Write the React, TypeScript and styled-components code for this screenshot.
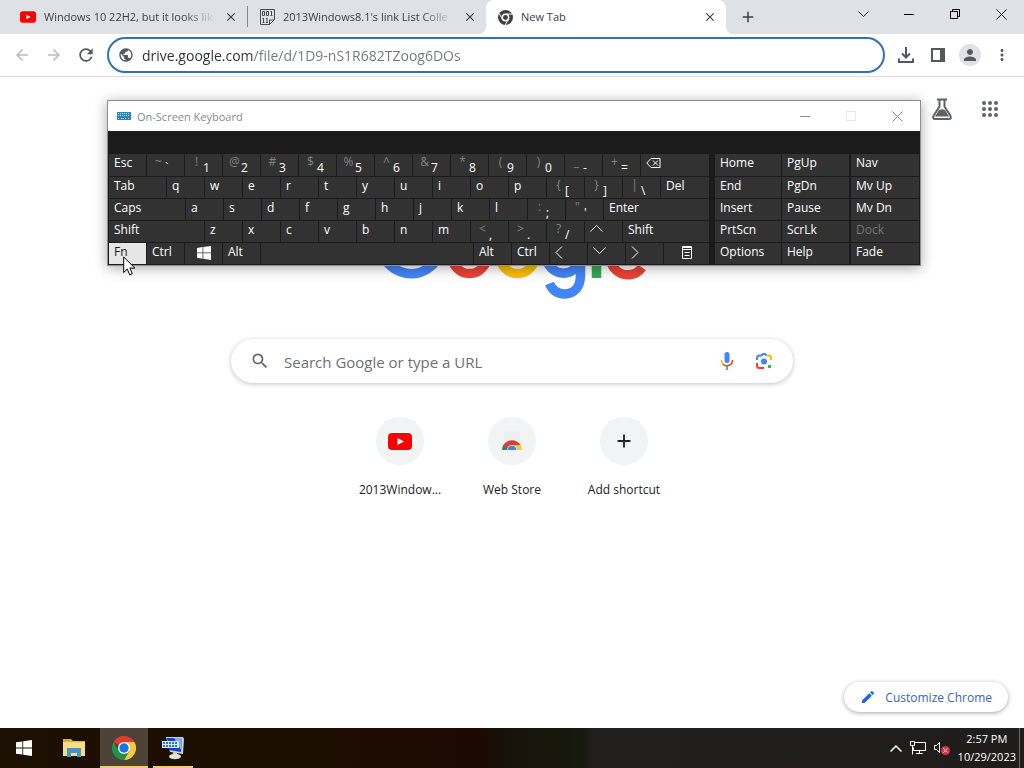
import React from 'react';
import styled, { createGlobalStyle, css } from 'styled-components';
import {
  MdArrowBack, MdArrowForward, MdRefresh, MdPublic, MdMoreVert, MdPerson, MdSearch, MdEdit, MdClose, MdAdd,
} from 'react-icons/md';

const GlobalStyle = createGlobalStyle`
  *, *::before, *::after { box-sizing: border-box; }
  body { margin: 0; font-family: "Open Sans", "Noto Sans", sans-serif; font-size: 12px; color: #202124; }
  button, input { font: inherit; color: inherit; }
  button { border: 0; padding: 0; background: none; cursor: default; }
  svg { display: block; flex: none; }
`;

const Desktop = styled.div`
  position: relative;
  display: flex;
  flex-direction: column;
  min-height: 100vh;
  overflow: hidden;
  background: #fff;
`;

/* ---------- Browser tab strip ---------- */

const TabStrip = styled.header`
  display: flex;
  height: 34px;
  background: #dee1e6;
`;

const Tabs = styled.div`
  display: grid;
  grid-template-columns: 248fr 238fr 240fr;
  flex: 0 1 726px;
  min-width: 0;
`;

const Tab = styled.div<{ $active?: boolean; $first?: boolean; $divided?: boolean }>`
  position: relative;
  display: flex;
  align-items: center;
  gap: 8px;
  min-width: 0;
  padding: 0 8px 0 ${p => (p.$first ? 20 : 12)}px;
  ${p => p.$divided && css`
    border-right: 1px solid transparent;
    border-image: linear-gradient(transparent 7px, #83868b 7px, #83868b 26px, transparent 26px) 1;
  `}
  ${p => p.$active && css`
    background: #fff;
    border-radius: 8px 8px 0 0;
    &::before, &::after {
      content: '';
      position: absolute;
      bottom: 0;
      width: 8px;
      height: 8px;
    }
    &::before { left: -8px; background: radial-gradient(circle at 0 0, transparent 8px, #fff 8px); }
    &::after { right: -8px; background: radial-gradient(circle at 100% 0, transparent 8px, #fff 8px); }
  `}
`;

const TabTitle = styled.button<{ $fade?: boolean }>`
  flex: 1;
  min-width: 0;
  overflow: hidden;
  white-space: nowrap;
  text-align: left;
  font-size: 11px;
  line-height: 18px;
  color: #3c4043;
  ${p => p.$fade && css`mask-image: linear-gradient(90deg, #000 calc(100% - 32px), transparent);`}
`;

const TabClose = styled.button`
  display: flex;
  align-items: center;
  justify-content: center;
  width: 16px;
  height: 16px;
  color: #3c4043;
`;

const NewTab = styled(TabClose)`
  width: 28px;
  height: 34px;
  margin-left: 8px;
`;

const Caption = styled.div`
  display: flex;
  margin-left: auto;
`;

const CaptionButton = styled.button`
  display: flex;
  align-items: center;
  justify-content: center;
  width: 46px;
  height: 28px;
`;

/* ---------- Browser toolbar ---------- */

const Toolbar = styled.nav`
  display: flex;
  align-items: center;
  height: 43px;
  padding: 0 6px;
  border-bottom: 1px solid #dadce0;
`;

const ToolButton = styled.button<{ $dim?: boolean }>`
  display: flex;
  align-items: center;
  justify-content: center;
  width: 32px;
  height: 32px;
  color: ${p => (p.$dim ? '#b9bbbe' : '#54575b')};
`;

const Omnibox = styled.label`
  display: flex;
  align-items: center;
  gap: 8px;
  flex: 1;
  height: 36px;
  margin: 0 5px;
  padding: 0 9px;
  border: 2px solid #3470b8;
  border-radius: 18px;
  color: #54575b;
`;

const UrlInput = styled.input`
  flex: 1;
  min-width: 0;
  border: 0;
  outline: 0;
  padding: 0;
  height: 24px;
  font-size: 14px;
  background: linear-gradient(90deg, #2b2d30 111px, #73767a 111px);
  background-clip: text;
  -webkit-text-fill-color: transparent;
`;

const Avatar = styled.span`
  display: flex;
  align-items: center;
  justify-content: center;
  width: 22px;
  height: 22px;
  border-radius: 50%;
  background: #dee1e6;
  color: #54575b;
`;

/* ---------- New tab page ---------- */

const Page = styled.main`
  position: relative;
  flex: 1;
  display: flex;
  flex-direction: column;
  align-items: center;
`;

const PageActions = styled.div`
  display: flex;
  align-self: flex-end;
  gap: 24px;
  padding: 20px 22px 0 0;
  height: 44px;
`;

const PageAction = styled.button`
  display: flex;
  align-items: center;
  justify-content: center;
  width: 24px;
  height: 24px;
  color: #5f6368;
`;

const Logo = styled.svg`
  margin-top: 88px;
`;

const SearchBox = styled.label`
  display: flex;
  align-items: center;
  width: 562px;
  max-width: 90%;
  height: 44px;
  margin-top: 38px;
  padding: 0 20px 0 19px;
  border-radius: 22px;
  box-shadow: 0 1px 5px rgba(32, 33, 36, 0.28);
  color: #5f6368;
`;

const SearchInput = styled.input`
  flex: 1;
  min-width: 0;
  margin-left: 14px;
  padding: 2px 0 0;
  border: 0;
  outline: 0;
  font-size: 15px;
  background: none;
  &::placeholder { color: #6c6f73; opacity: 1; }
`;

const SearchIcons = styled.span`
  display: flex;
  gap: 18px;
`;

const Shortcuts = styled.div`
  display: flex;
  margin-top: 34px;
`;

const Shortcut = styled.a`
  display: flex;
  flex-direction: column;
  align-items: center;
  gap: 16px;
  width: 112px;
  line-height: 18px;
  color: #202124;
  text-decoration: none;
`;

const ShortcutIcon = styled.span`
  display: flex;
  align-items: center;
  justify-content: center;
  width: 48px;
  height: 48px;
  border-radius: 50%;
  background: #f1f3f4;
`;

const Customize = styled.button`
  position: absolute;
  right: 16px;
  bottom: 16px;
  display: flex;
  align-items: center;
  gap: 9px;
  height: 30px;
  padding: 0 16px;
  border-radius: 15px;
  background: #fff;
  box-shadow: 0 1px 4px rgba(32, 33, 36, 0.4);
  color: #3b62b5;
`;

/* ---------- On-screen keyboard window ---------- */

const KeyboardWindow = styled.section`
  position: absolute;
  top: 100px;
  left: 107px;
  right: 103px;
  border: 1px solid #8e8e8e;
  background: #1b1b1b;
  box-shadow: 0 2px 12px rgba(0, 0, 0, 0.35);
`;

const KeyboardTitle = styled.div`
  display: flex;
  align-items: center;
  gap: 6px;
  height: 30px;
  padding-left: 9px;
  background: #fff;
  font-size: 11px;
  color: #8a8a8a;
`;

const Keys = styled.div`
  display: flex;
  padding: 23px 1px 1px;
`;

const KeyBlock = styled.div<{ $grow: number; $gap: number }>`
  display: flex;
  flex-direction: column;
  gap: 1px;
  flex: ${p => p.$grow} 1 0;
  margin-left: ${p => p.$gap}px;
`;

const KeyRow = styled.div<{ $tall?: boolean; $columns: number[] }>`
  display: grid;
  grid-template-columns: ${p => p.$columns.map(c => `minmax(0, ${c}fr)`).join(' ')};
  grid-template-rows: minmax(0, 1fr);
  gap: 1px;
  height: ${p => (p.$tall ? 22 : 21)}px;
`;

const Key = styled.button<{ $lit?: boolean; $dim?: boolean; $center?: boolean }>`
  display: flex;
  align-items: flex-start;
  min-width: 0;
  padding: 0 5px;
  justify-content: ${p => (p.$center ? 'center' : 'flex-start')};
  line-height: 18px;
  white-space: nowrap;
  color: ${p => (p.$lit ? '#1b1b1b' : p.$dim ? '#777' : '#fff')};
  background: ${p => (p.$lit ? '#e6e6e6' : '#323232')};
`;

const Shifted = styled.span`
  width: 13px;
  line-height: 16px;
  color: #828282;
`;

const Plain = styled.span`
  line-height: 28px;
`;

const Pointer = styled.svg`
  position: absolute;
  left: 123px;
  top: 256px;
`;

/* ---------- Taskbar ---------- */

const Taskbar = styled.footer`
  display: flex;
  height: 40px;
  background: linear-gradient(90deg, #1c1002, #1d0e02 30%, #1b0a01 47%, #17120a 49%, #171a0e 57%, #22201e 58%, #1f1c1a);
  color: #fff;
`;

const TaskButton = styled.button<{ $active?: boolean; $wide?: boolean; $running?: boolean }>`
  display: flex;
  flex-direction: column;
  align-items: center;
  justify-content: center;
  width: ${p => (p.$wide ? 52 : 48)}px;
  height: 40px;
  ${p => p.$active && css`background: #4c4238; box-shadow: inset 0 -2px #f3c777;`}
  ${p => p.$running && css`
    width: 40px;
    margin-left: 5px;
    box-shadow: inset 0 -2px #f3c777;
  `}
`;

const Tray = styled.div`
  display: flex;
  align-items: center;
  gap: 8px;
  margin-left: auto;
  padding-right: 3px;
  border-right: 1px solid #6b6764;
  margin-right: 4px;
`;

const TrayButton = styled.button`
  display: flex;
`;

const Clock = styled.time`
  font-size: 11px;
  line-height: 18px;
  text-align: center;
`;

/* ---------- Icons ---------- */

const YouTube = ({ w, h }: { w: number; h: number }) => (
  <svg width={w} height={h} viewBox="0 0 24 17">
    <rect width="24" height="17" rx="4" fill="#f00" />
    <path d="M9.500 5v7l6.500-3.500z" fill="#fff" />
  </svg>
);

const BinaryFile = () => (
  <svg width="15" height="16" viewBox="0 0 15 16" fill="none" stroke="#4a4d50">
    <path d="M.5.5h14v10l-5 5h-9z" />
    <path d="M9.500 15.500v-4.500h5" />
    <path d="M2.500 2.500h2v4h-2zM6.500 2.500h2v4h-2zM11.500 2v5M10.500 2.500h1M10.500 6.500h2M3.500 9v5M2.500 9.500h1M2.500 13.500h2M7 9v5M6 9.500h1M6 13.500h2" />
  </svg>
);

const ChromeMono = () => (
  <svg width="15" height="15" viewBox="0 0 24 24">
    <circle cx="12" cy="12" r="12" fill="#3c4043" />
    <circle cx="12" cy="12" r="6.300" fill="#fff" />
    <circle cx="12" cy="12" r="3.900" fill="#3c4043" />
    <path d="M12 6.500h11M7.200 14.800 1.800 5.500M16.800 14.800 11.500 24" stroke="#fff" strokeWidth="1.600" />
  </svg>
);

const ChromeColor = () => (
  <svg width="24" height="24" viewBox="0 0 24 24">
    <path d="M12 12 1.600 6A12 12 0 0 1 22.400 6z" fill="#e33b2e" />
    <path d="M12 6h10.400A12 12 0 0 1 12 24l5.200-9z" fill="#fcc934" />
    <path d="M1.600 6 6.800 15a6 6 0 0 0 10.400 0L12 24A12 12 0 0 1 1.600 6z" fill="#1e9448" />
    <circle cx="12" cy="12" r="6" fill="#fff" />
    <circle cx="12" cy="12" r="4.700" fill="#1a73e8" />
  </svg>
);

const GoogleLogo = () => (
  <Logo width="272" height="92" viewBox="0 0 272 92" fill="none" strokeWidth="9.500" role="img" aria-label="Google">
    <path d="M58.500 14.500A30.500 30.500 0 1 0 65.500 37H36" stroke="#4285f4" />
    <circle cx="93.500" cy="47.200" r="17.400" stroke="#ea4335" />
    <circle cx="141.500" cy="47.200" r="17.400" stroke="#fbbc05" />
    <circle cx="187.500" cy="47.200" r="17" stroke="#4285f4" />
    <path d="M204.500 27v39c0 12-6.500 19-16 19-7.500 0-12.500-4.500-15-10.500" stroke="#4285f4" />
    <path d="M220.500 3v66" stroke="#34a853" />
    <path d="M266 58.500a17.400 17.400 0 1 1 .500-19.500L236 52" stroke="#ea4335" />
  </Logo>
);

const WindowsLogo = ({ size }: { size: number }) => (
  <svg width={size} height={size} viewBox="0 0 16 16" fill="#fff">
    <path d="M0 2.300 6.400 1.400v6.200H0zM7.200 1.300 16 0v7.600H7.200zM0 8.400h6.400v6.200L0 13.700zM7.200 8.400H16V16l-8.800-1.300z" />
  </svg>
);

const Folder = () => (
  <svg width="22" height="20" viewBox="0 0 22 20">
    <path d="M0 1h8l2 2h12v15H0z" fill="#e3a93a" />
    <path d="M0 4h22v14H0z" fill="#fbdc80" />
    <path d="M4 19v-9h14v9h-4v-4H8v4z" fill="#4b93bd" />
  </svg>
);

const OskTask = () => (
  <svg width="24" height="24" viewBox="0 0 24 24">
    <path d="M5 1h17l1 2-1 15-13-2z" fill="#c9d3de" />
    <path d="M6 2h15l-1 14-12-2z" fill="#1740bd" />
    <path d="M13 2h8l-1 12z" fill="#7fb0f2" />
    <rect x="1" y="5" width="17" height="7" fill="#d8ebfa" />
    <path d="M2 7h15M2 10h15" stroke="#2479c2" strokeDasharray="2 1" strokeWidth="2" />
    <path d="M12 16h4v4h-4z" fill="#cfccc2" />
    <ellipse cx="14" cy="20.500" rx="6" ry="2.800" fill="#e5e2d8" />
  </svg>
);

const KeyboardGlyph = () => (
  <svg width="14" height="8" viewBox="0 0 14 8">
    <rect width="14" height="8" fill="#2f7fbd" />
    <path d="M1 1.500h12M1 3.500h12M1 6.500h2M4 6.500h6M11 6.500h2" stroke="#cfe5f5" strokeDasharray="1 1" />
  </svg>
);

const Stroke = ({ w, h, d, color = 'currentColor', sw = 1 }: { w: number; h: number; d: string; color?: string; sw?: number }) => (
  <svg width={w} height={h} viewBox={`0 0 ${w} ${h}`} fill="none" stroke={color} strokeWidth={sw}>
    <path d={d} />
  </svg>
);

const Download = () => (
  <svg width="18" height="18" viewBox="0 0 18 18" fill="none" stroke="currentColor" strokeWidth="2">
    <path d="M9 1v10M5 7.500l4 4 4-4M2 12.500V16h14v-3.500" />
  </svg>
);

const SidePanel = () => (
  <svg width="14" height="14" viewBox="0 0 14 14">
    <rect x="1" y="1" width="12" height="12" fill="none" stroke="currentColor" strokeWidth="2" />
    <rect x="9" y="1" width="4" height="12" fill="currentColor" />
  </svg>
);

const Flask = () => (
  <svg width="20" height="22" viewBox="0 0 20 22">
    <path d="M5 1.500h10M7.500 2v6.500L1.500 18q-1 3 1.500 3h14q2.500 0 1.500-3L12.500 8.500V2" fill="none" stroke="currentColor" strokeWidth="2" />
    <path d="M7 12q3-1.500 6 0l4 6.500H3z" fill="currentColor" />
  </svg>
);

const AppsGrid = () => (
  <svg width="18" height="18" viewBox="0 0 18 18" fill="currentColor">
    {[3, 9, 15].map(y => [3, 9, 15].map(x => <circle key={`${x}-${y}`} cx={x} cy={y} r="2" />))}
  </svg>
);

const Mic = () => (
  <svg width="20" height="20" viewBox="0 0 20 20" fill="none" strokeWidth="1.600">
    <rect x="7.500" y="1" width="5" height="11" rx="2.500" fill="#4285f4" />
    <path d="M4.500 9A5.500 5.500 0 0 0 6 13" stroke="#fbbc04" />
    <path d="M6 13a5.500 5.500 0 0 0 9.500-4" stroke="#ea4335" />
    <path d="M10 15v4" stroke="#34a853" />
  </svg>
);

const Lens = () => (
  <svg width="18" height="20" viewBox="0 -1 18 20" fill="none" strokeWidth="2">
    <path d="M2 8V6q0-2.500 2.500-2.500h2L8 2h2l1.500 1.500" stroke="#4285f4" />
    <path d="M11.500 3.500h2Q16 3.500 16 6v2" stroke="#fbbc04" />
    <path d="M2 11v2.500Q2 16 4.500 16H9" stroke="#ea4335" />
    <circle cx="9" cy="9.500" r="3" fill="#4285f4" />
    <circle cx="14.500" cy="14.500" r="1.800" fill="#34a853" />
  </svg>
);

const WebStore = () => (
  <svg width="20" height="20" viewBox="0 0 20 20">
    <path d="M3 0h14l3 19H0z" fill="#eceff1" />
    <path d="M0 19a10 10 0 0 1 2-6l5 4v2z" fill="#1e9448" />
    <path d="M1.500 14A10 10 0 0 1 18.500 14L10 14.500 6 19z" fill="#de3d32" />
    <path d="M10 14h8.500a10 10 0 0 1 1.500 5h-7z" fill="#fcc934" />
    <path d="M5 19a5 5 0 0 1 10 0z" fill="#fff" />
    <path d="M5.500 19a4.500 4.500 0 0 1 9 0z" fill="#4285f4" />
  </svg>
);

const Backspace = () => <Stroke w={15} h={18} sw={1} d="M5 4.500h9v9H5L.800 9zM7 6.500l5 5M12 6.500l-5 5" />;

const MenuGlyph = () => (
  <svg width="10" height="20" viewBox="0 0 10 20" fill="none" stroke="#fff">
    <path d="M.500 3.500h9v12h-9zM0 4.500h10M0 6.500h10M2.500 9.500h5M2.500 12.500h5" />
  </svg>
);

const WindowsKeyGlyph = () => (
  <svg width="14" height="18" viewBox="0 -3 16 20" fill="#fff">
    <path d="M0 2.300 6.400 1.400v6.200H0zM7.200 1.300 16 0v7.600H7.200zM0 8.400h6.400v6.200L0 13.700zM7.200 8.400H16V16l-8.800-1.300z" />
  </svg>
);

/* ---------- Key data ---------- */

type KeyDef = { label: React.ReactNode; name?: string; shift?: string; units?: number; lit?: boolean; center?: boolean };

const letters = (text: string): KeyDef[] => text.split('').map(label => ({ label }));
const pair = (shift: string, label: string): KeyDef => ({ shift, label });

const mainRows: KeyDef[][] = [
  [
    { label: 'Esc' },
    pair('~', '`'), pair('!', '1'), pair('@', '2'), pair('#', '3'), pair('$', '4'), pair('%', '5'), pair('^', '6'),
    pair('&', '7'), pair('*', '8'), pair('(', '9'), pair(')', '0'), pair('_', '-'), pair('+', '='),
    { label: <Backspace />, name: 'Backspace', units: 68 },
  ],
  [
    { label: 'Tab', units: 57 }, ...letters('qwertyuiop'), pair('{', '['), pair('}', ']'), pair('|', '\\'),
    { label: 'Del', units: 48 },
  ],
  [{ label: 'Caps', units: 76 }, ...letters('asdfghjkl'), pair(':', ';'), pair('"', "'"), { label: 'Enter', units: 105 }],
  [
    { label: 'Shift', units: 95 }, ...letters('zxcvbnm'), pair('<', ','), pair('>', '.'), pair('?', '/'),
    { label: <Stroke w={13} h={16} d="M.500 10.500l6-6 6 6" />, name: 'Up' },
    { label: 'Shift', units: 86 },
  ],
  [
    { label: 'Fn', lit: true }, { label: 'Ctrl' },
    { label: <WindowsKeyGlyph />, name: 'Windows', center: true },
    { label: 'Alt' }, { label: '', name: 'Space', units: 212 }, { label: 'Alt' }, { label: 'Ctrl' },
    { label: <Stroke w={8} h={18} d="M7 3.500l-6 6 6 6" />, name: 'Left' },
    { label: <Stroke w={13} h={16} d="M.500 4.500l6 6 6-6" />, name: 'Down' },
    { label: <Stroke w={8} h={18} d="M1 3.500l6 6-6 6" />, name: 'Right' },
    { label: <MenuGlyph />, name: 'Menu', units: 45, center: true },
  ],
];

const navRows = [['Home', 'PgUp'], ['End', 'PgDn'], ['Insert', 'Pause'], ['PrtScn', 'ScrLk'], ['Options', 'Help']];
const sideRows = ['Nav', 'Mv Up', 'Mv Dn', 'Dock', 'Fade'];

export default function App() {
  return (
    <Desktop>
      <GlobalStyle />
      <TabStrip>
        <Tabs>
          <Tab $first $divided>
            <YouTube w={16} h={12} />
            <TabTitle $fade>Windows 10 22H2, but it looks lik</TabTitle>
            <TabClose aria-label="Close tab"><MdClose size={14} /></TabClose>
          </Tab>
          <Tab>
            <BinaryFile />
            <TabTitle $fade>2013Windows8.1's link List Colle</TabTitle>
            <TabClose aria-label="Close tab"><MdClose size={14} /></TabClose>
          </Tab>
          <Tab $active>
            <ChromeMono />
            <TabTitle>New Tab</TabTitle>
            <TabClose aria-label="Close tab"><MdClose size={14} /></TabClose>
          </Tab>
        </Tabs>
        <NewTab aria-label="New tab"><MdAdd size={18} /></NewTab>
        <Caption>
          <CaptionButton aria-label="Search tabs"><Stroke w={11} h={6} d="M.500.500l5 5 5-5" /></CaptionButton>
          <CaptionButton aria-label="Minimize"><Stroke w={10} h={1} d="M0 .500h10" color="#000" /></CaptionButton>
          <CaptionButton aria-label="Restore"><Stroke w={10} h={10} d="M.500 2.500h7v7h-7zM2.500 2.500v-2h7v7h-2" color="#000" /></CaptionButton>
          <CaptionButton aria-label="Close"><Stroke w={11} h={11} d="M.500.500l10 10M10.500.500l-10 10" color="#000" /></CaptionButton>
        </Caption>
      </TabStrip>

      <Toolbar>
        <ToolButton $dim aria-label="Back"><MdArrowBack size={18} /></ToolButton>
        <ToolButton $dim aria-label="Forward"><MdArrowForward size={18} /></ToolButton>
        <ToolButton aria-label="Reload"><MdRefresh size={20} /></ToolButton>
        <Omnibox>
          <MdPublic size={16} />
          <UrlInput aria-label="Address" defaultValue="drive.google.com/file/d/1D9-nS1R682TZoog6DOs" />
        </Omnibox>
        <ToolButton aria-label="Downloads"><Download /></ToolButton>
        <ToolButton aria-label="Side panel"><SidePanel /></ToolButton>
        <ToolButton aria-label="Profile"><Avatar><MdPerson size={18} /></Avatar></ToolButton>
        <ToolButton aria-label="Menu"><MdMoreVert size={18} /></ToolButton>
      </Toolbar>

      <Page>
        <PageActions>
          <PageAction aria-label="Labs"><Flask /></PageAction>
          <PageAction aria-label="Apps"><AppsGrid /></PageAction>
        </PageActions>
        <GoogleLogo />
        <SearchBox>
          <MdSearch size={20} />
          <SearchInput aria-label="Search" placeholder="Search Google or type a URL" />
          <SearchIcons><Mic /><Lens /></SearchIcons>
        </SearchBox>
        <Shortcuts>
          <Shortcut href="#"><ShortcutIcon><YouTube w={24} h={17} /></ShortcutIcon>2013Window...</Shortcut>
          <Shortcut href="#"><ShortcutIcon><WebStore /></ShortcutIcon>Web Store</Shortcut>
          <Shortcut href="#"><ShortcutIcon><MdAdd size={22} /></ShortcutIcon>Add shortcut</Shortcut>
        </Shortcuts>
        <Customize><MdEdit size={16} color="#1a66d6" />Customize Chrome</Customize>
      </Page>

      <Taskbar>
        <TaskButton aria-label="Start"><WindowsLogo size={16} /></TaskButton>
        <TaskButton $wide aria-label="File Explorer"><Folder /></TaskButton>
        <TaskButton $active aria-label="Chrome"><ChromeColor /></TaskButton>
        <TaskButton $running aria-label="On-Screen Keyboard"><OskTask /></TaskButton>
        <Tray>
          <TrayButton aria-label="Show hidden icons"><Stroke w={12} h={7} d="M.500 6.500l5.500-5.500 5.500 5.500" sw={1.5} /></TrayButton>
          <TrayButton aria-label="Network">
            <Stroke w={16} h={14} d="M5 1.500h10.500v8H3.500v-3M.500.500h4v4h-4zM2.500 4.500v9M9.500 9.500v3M6 12.500h7" />
          </TrayButton>
          <TrayButton aria-label="Volume muted">
            <svg width="16" height="14" viewBox="0 0 16 14">
              <path d="M.500 4.500h2l3-3v10l-3-3h-2z" fill="none" stroke="#fff" />
              <circle cx="11.500" cy="9.500" r="4.500" fill="#d5324a" />
              <path d="M9.500 7.500l4 4M13.500 7.500l-4 4" stroke="#fff" />
            </svg>
          </TrayButton>
          <Clock>2:57 PM<br />10/29/2023</Clock>
        </Tray>
      </Taskbar>

      <KeyboardWindow aria-label="On-Screen Keyboard">
        <KeyboardTitle>
          <KeyboardGlyph />
          On-Screen Keyboard
          <Caption>
            <CaptionButton aria-label="Minimize"><Stroke w={10} h={1} d="M0 .500h10" /></CaptionButton>
            <CaptionButton aria-label="Maximize"><Stroke w={10} h={10} d="M.500.500h9v9h-9z" color="#e8e8e8" /></CaptionButton>
            <CaptionButton aria-label="Close"><Stroke w={11} h={11} d="M.500.500l10 10M10.500.500l-10 10" /></CaptionButton>
          </Caption>
        </KeyboardTitle>
        <Keys>
          <KeyBlock $grow={600} $gap={0}>
            {mainRows.map((row, r) => (
              <KeyRow key={r} $tall={r === 0} $columns={row.map(k => k.units ?? 37)}>
                {row.map((k, i) => (
                  <Key key={i} $lit={k.lit} $center={k.center} aria-label={k.name}>
                    {k.shift ? <><Shifted>{k.shift}</Shifted><Plain>{k.label}</Plain></> : k.label}
                  </Key>
                ))}
              </KeyRow>
            ))}
          </KeyBlock>
          <KeyBlock $grow={134} $gap={6}>
            {navRows.map((row, r) => (
              <KeyRow key={r} $tall={r === 0} $columns={[66, 67]}>
                {row.map(label => <Key key={label}>{label}</Key>)}
              </KeyRow>
            ))}
          </KeyBlock>
          <KeyBlock $grow={68} $gap={2}>
            {sideRows.map((label, r) => (
              <KeyRow key={label} $tall={r === 0} $columns={[68]}>
                <Key $dim={label === 'Dock'}>{label}</Key>
              </KeyRow>
            ))}
          </KeyBlock>
        </Keys>
      </KeyboardWindow>

      <Pointer width="13" height="20" viewBox="0 0 13 20" aria-hidden="true">
        <path d="M.700 1v15.500l3.600-3.500 2.400 5.800 2.600-1.100-2.400-5.600h5z" fill="#fff" stroke="#000" />
      </Pointer>
    </Desktop>
  );
}
